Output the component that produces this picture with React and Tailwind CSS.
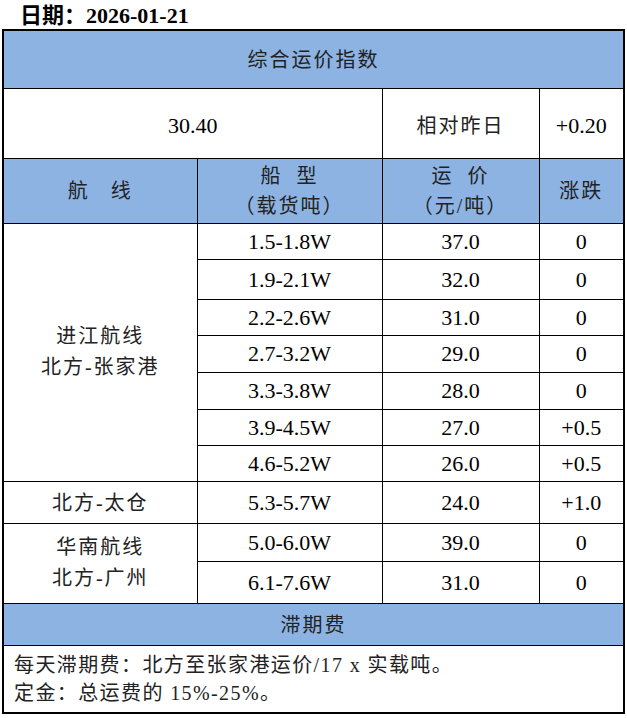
import React from 'react';

const rows = [
  { type: '1.5-1.8W', price: '37.0', chg: '0', h: 'h-[36px]' },
  { type: '1.9-2.1W', price: '32.0', chg: '0', h: 'h-[40px]' },
  { type: '2.2-2.6W', price: '31.0', chg: '0', h: 'h-[36px]' },
  { type: '2.7-3.2W', price: '29.0', chg: '0', h: 'h-[37px]' },
  { type: '3.3-3.8W', price: '28.0', chg: '0', h: 'h-[37px]' },
  { type: '3.9-4.5W', price: '27.0', chg: '+0.5', h: 'h-[36px]' },
  { type: '4.6-5.2W', price: '26.0', chg: '+0.5', h: 'h-[36px]' },
];

// 单元格通用样式
const cell = 'border border-black text-center align-middle p-0';
const blue = 'bg-[#8db3e2]';
const cjk = 'tracking-[2px] text-[20px] text-[#222]';

export default function App() {
  return (
    <div className="w-[627px] h-[718px] bg-white font-['Liberation_Serif','Noto_Sans_CJK_SC',serif] text-black">
      <div className="h-[29px] pl-[20px] pt-[3px] flex items-center text-[22px] font-bold leading-none">
        日期：2026-01-21
      </div>
      <table className="ml-[2px] w-[621px] border-collapse table-fixed border-2 border-black text-[22px]">
        <colgroup>
          <col className="w-[194px]" />
          <col className="w-[185px]" />
          <col className="w-[157px]" />
          <col className="w-[85px]" />
        </colgroup>
        <tbody>
          <tr>
            <td colSpan={4} className={`${cell} ${blue} h-[58px]`}>
              <span className={cjk}>综合运价指数</span>
            </td>
          </tr>
          <tr>
            <td colSpan={2} className={`${cell} h-[70px] pt-[5px]`}>30.40</td>
            <td className={`${cell} pt-[5px]`}><span className={cjk}>相对昨日</span></td>
            <td className={`${cell} pt-[5px]`}>+0.20</td>
          </tr>
          <tr className={blue}>
            <td className={`${cell} h-[65px]`}>
              <span className={cjk}>航&nbsp;&nbsp;&nbsp;线</span>
            </td>
            <td className={`${cell} leading-[30px]`}>
              <div className={cjk}>船&nbsp;&nbsp;型</div>
              <div className={cjk}>（载货吨）</div>
            </td>
            <td className={`${cell} leading-[30px]`}>
              <div className={cjk}>运&nbsp;&nbsp;价</div>
              <div className={`${cjk} tracking-[1px]`}>（元/吨）</div>
            </td>
            <td className={cell}><span className={cjk}>涨跌</span></td>
          </tr>
          {rows.map((r, i) => (
            <tr key={r.type}>
              {i === 0 && (
                <td rowSpan={7} className={`${cell} leading-[31px]`}>
                  <div className={cjk}>进江航线</div>
                  <div className={cjk}>北方-张家港</div>
                </td>
              )}
              <td className={`${cell} ${r.h}`}>{r.type}</td>
              <td className={cell}>{r.price}</td>
              <td className={cell}>{r.chg}</td>
            </tr>
          ))}
          <tr>
            <td className={`${cell} h-[42px]`}><span className={cjk}>北方-太仓</span></td>
            <td className={cell}>5.3-5.7W</td>
            <td className={cell}>24.0</td>
            <td className={cell}>+1.0</td>
          </tr>
          <tr>
            <td rowSpan={2} className={`${cell} leading-[31px]`}>
              <div className={cjk}>华南航线</div>
              <div className={cjk}>北方-广州</div>
            </td>
            <td className={`${cell} h-[38px]`}>5.0-6.0W</td>
            <td className={cell}>39.0</td>
            <td className={cell}>0</td>
          </tr>
          <tr>
            <td className={`${cell} h-[42px]`}>6.1-7.6W</td>
            <td className={cell}>31.0</td>
            <td className={cell}>0</td>
          </tr>
          <tr>
            <td colSpan={4} className={`${cell} ${blue} h-[42px]`}>
              <span className={cjk}>滞期费</span>
            </td>
          </tr>
          <tr>
            <td colSpan={4} className="border border-black h-[68px] text-left align-top pl-[10px] pt-[5px] text-[20px] leading-[28px] tracking-[1.4px] text-[#222]">
              <div>每天滞期费：北方至张家港运价/17 x 实载吨。</div>
              <div>定金：总运费的 15%-25%。</div>
            </td>
          </tr>
        </tbody>
      </table>
    </div>
  );
}
